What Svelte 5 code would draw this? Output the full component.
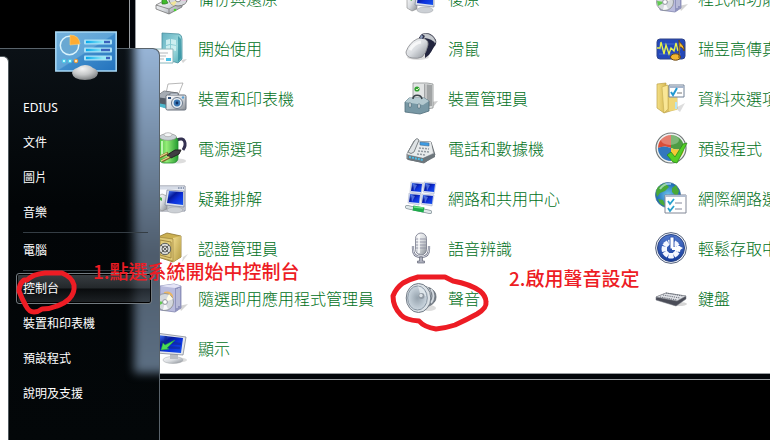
<script>
  const columns = [
    [
      ['backup', '備份與還原'],
      ['start', '開始使用'],
      ['printer', '裝置和印表機'],
      ['power', '電源選項'],
      ['trouble', '疑難排解'],
      ['safe', '認證管理員'],
      ['box', '隨選即用應用程式管理員'],
      ['display', '顯示']
    ],
    [
      ['recovery', '復原'],
      ['mouse', '滑鼠'],
      ['device', '裝置管理員'],
      ['phone', '電話和數據機'],
      ['network', '網路和共用中心'],
      ['mic', '語音辨識'],
      ['speaker', '聲音']
    ],
    [
      ['box', '程式和功能'],
      ['audio', '瑞昱高傳真音效管理員'],
      ['folder', '資料夾選項'],
      ['defaults', '預設程式'],
      ['internet', '網際網路選項'],
      ['ease', '輕鬆存取中心'],
      ['keyboard', '鍵盤']
    ]
  ];
  const groups = [
    ['EDIUS', '文件', '圖片', '音樂'],
    ['電腦'],
    ['控制台', '裝置和印表機', '預設程式', '說明及支援']
  ];
  const segments = [0, 45, 90, 135, 180, 225, 270, 315];
</script>

{#snippet icon(name)}
  <svg class="icon" viewBox="0 0 32 32" aria-hidden="true">
    {#if name === 'backup'}
      <path d="M1 23 14 16l13 4v5L14 32 1 27z" fill="url(#metal)" stroke="#666" stroke-width=".7" />
      <path d="m1 23 13 4 13-7M14 27v5" fill="none" stroke="#777" stroke-width=".8" />
      <ellipse cx="23" cy="18" rx="9" ry="6" fill="#d5d8dc" stroke="#777" />
      <path d="m23 18 7-3 1 4z" fill="#e9b7da" /><path d="m23 18-8 3 4 3z" fill="#f0e59a" />
      <ellipse cx="23" cy="18" rx="2.5" ry="1.8" fill="#fff" stroke="#888" />
      <path d="M7 22V16h3l3 5-3 1z" fill="#3fbb2b" stroke="#287c20" stroke-width=".7" />
      <circle cx="20" cy="28" r="1.3" fill="#46d52c" />
    {:else if name === 'start'}
      <path d="M26 28 32 27l-4 4z" fill="#bbb" opacity=".6" />
      <path d="M7 1 24 2q3 1 3 5v20l-4 4L7 26z" fill="url(#teal)" stroke="#478e9d" stroke-width=".8" />
      <path d="m23 4 3 3v19l-3 4z" fill="#2d8b9c" opacity=".7" />
      <path d="m11 8 4-1v5l-4 1zm5-1 5 1v5l-5-1zm-5 7 4-1v5l-4-1zm5-1 5 1v5l-5-1z" fill="#d7f3f5" opacity=".85" />
      <path d="M1 17h17v14H1z" fill="#fdfdfd" stroke="#8bb6bb" />
      <path d="M4 21h9M4 24h7M4 27h5" stroke="#b2b7bb" stroke-width="1" /><path d="M11 26h5v3h-5z" fill="#4dc2e8" />
    {:else if name === 'printer'}
      <path d="m13 2 15-1-6 15H10z" fill="#fff" stroke="#999" stroke-width=".7" />
      <path d="m1 15 8-6 14 2v14l-9 2L1 22z" fill="#555d67" stroke="#333" stroke-width=".6" />
      <path d="m1 15 8-6 12 2-6 6z" fill="#a6acb3" /><path d="m2 21 11 2v4L2 24z" fill="#4db6cb" />
      <rect x="11" y="13" width="20" height="15" rx="1.5" fill="url(#metal)" stroke="#68717c" />
      <path d="M15 13v-2h8v2" fill="#bcc4cc" stroke="#68717c" stroke-width=".7" />
      <path d="M13 15h3v2h-3z" fill="#32517b" />
      <circle cx="22" cy="21" r="5.5" fill="#e7edf3" stroke="#6d7b8c" /><circle cx="22" cy="21" r="3.4" fill="#3977b4" /><circle cx="22" cy="21" r="1.4" fill="#112f61" />
      <circle cx="28" cy="15.5" r="1.2" fill="#59a0d3" />
    {:else if name === 'power'}
      <ellipse cx="23" cy="29" rx="8" ry="2.5" fill="#bbb" opacity=".5" />
      <path d="M22 8c8-4 10 4 6 10" fill="none" stroke="#343151" stroke-width="3" />
      <rect x="4" y="4" width="19" height="27" rx="5" fill="url(#green)" stroke="#238a30" stroke-width=".8" />
      <ellipse cx="13" cy="5" rx="8.5" ry="3.3" fill="#cbd2d7" stroke="#888" stroke-width=".6" /><ellipse cx="13" cy="2.7" rx="4" ry="2" fill="#f4f6f7" stroke="#999" stroke-width=".6" />
      <path d="M7 9v16" stroke="#d5ffc8" stroke-width="2" opacity=".8" />
      <path d="m12 23 8-5 6 0-2 4-8 4z" fill="#403d43" stroke="#222" />
      <path d="m5 25 8-4m-6 8 8-4" stroke="#7b632a" stroke-width="2.6" /><path d="m4 25 8-4m-6 8 8-4" stroke="#ead58d" stroke-width="1.3" />
    {:else if name === 'trouble' || name === 'recovery'}
      {#if name === 'trouble'}<path d="M1 4h29v25H1z" fill="#fbfcff" stroke="#858b9b" /><path d="M1.5 4.5h28v3h-28z" fill="#d5dbe6" /><path d="M23 6h1.5m1 0H27m1 0h1" stroke="#526487" /><path d="M2 23h27v5H2z" fill="#aeb4bd" opacity=".75" />{/if}
      <path d="m2 15 5-3 5 2v13l-5 2-5-3z" fill="url(#metal)" stroke="#888" stroke-width=".6" />
      <path d="m5 15 2 1v3l-2-1z" fill="#4cad4d" />
      <path d="m12 8 17 1v16l-19-2z" fill="#dae0ed" stroke="#6f7890" stroke-width=".6" /><path d="m14 9 14 1v13l-16-2z" fill="url(#screen)" />
      <ellipse cx="20" cy="28" rx="8" ry="3" fill="#ccd0d5" stroke="#9a9ea5" stroke-width=".5" />
    {:else if name === 'safe'}
      <path d="m28 25 5-3-6 8z" fill="#aaa" opacity=".45" />
      <path d="m3 5 9-4 14 3v21l-8 5-15-5z" fill="#cbb052" stroke="#8d742c" stroke-width=".8" />
      <path d="m18 6 8-2v21l-8 5z" fill="url(#gold)" /><path d="m3 5 15 2v22L3 25z" fill="#e0cb7a" stroke="#947b38" stroke-width=".6" />
      <path d="m5 8 11 2v16L5 23z" fill="none" stroke="#a38a40" />
      <circle cx="10" cy="17" r="5.7" fill="#dadcda" stroke="#5f625e" /><circle cx="10" cy="17" r="3" fill="none" stroke="#62635f" /><path d="m6 13 8 8m0-8-8 8" stroke="#686966" />
    {:else if name === 'box'}
      <path d="m24 24 9-2-7 7z" fill="#aaa" opacity=".5" />
      <path d="m5 4 14-2 7 2v22l-6 4-15-2z" fill="#b9bbdd" stroke="#8387b0" stroke-width=".8" /><path d="m20 6 6-2v22l-6 4z" fill="#8f93bd" />
      <path d="m5 4 14-2 7 2-6 2z" fill="#e5e5f7" /><path d="M22 7v19m2-20v18" stroke="#dee0f1" />
      <path d="M9 10q7-2 9 4v10h-6z" fill="#ecb661" /><path d="M11 14h6v9h-5z" fill="#70bd81" />
      <circle cx="10" cy="20" r="8.5" fill="#d5d9dd" stroke="#858a91" stroke-width=".8" />
      <path d="m10 20 4-8 4 5z" fill="#fffbe5" /><path d="m10 20-8-1 1 5z" fill="#60ca50" /><path d="m10 20-2 8 5-1z" fill="#f7f8fa" />
      <circle cx="10" cy="20" r="2.4" fill="#fff" stroke="#9296a0" />
    {:else if name === 'display'}
      <ellipse cx="23" cy="28" rx="9" ry="2.5" fill="#aaa" opacity=".4" />
      <ellipse cx="18" cy="28" rx="10" ry="3.5" fill="url(#metal)" stroke="#a1a5a9" stroke-width=".5" /><path d="m15 20 8 1v6h-8z" fill="#b9bdc2" />
      <path d="M1 1 31 5l-3 18L1 21z" fill="#e4e6eb" stroke="#848a96" stroke-width=".8" />
      <path d="m2 3 26 3-2 15-24-2z" fill="url(#screen)" /><path d="m6 10 20 2M7 15l18 1M11 4 9 18" stroke="#10298b" stroke-width="2.5" opacity=".55" />
      <path d="m6 18 2-7 2 2 10-5-8 8 2 1z" fill="#4cda54" stroke="#22a63a" stroke-width=".5" />
    {:else if name === 'mouse'}
      <ellipse cx="13" cy="25" rx="11" ry="3" fill="#aaa" opacity=".4" />
      <path d="M14 6q2-5 8-5 6 1 9 7 1 4-2 7l-5 8-4 3 0-12z" fill="#27283d" />
      <path d="M17 2q7-2 12 4l2 4-6 6-5-9z" fill="#c5c9ce" stroke="#777a83" stroke-width=".5" />
      <path d="M20 6q7 1 10 5l-4 9-5 4z" fill="#22253f" />
      <path d="M1 20Q4 11 12 7q4-2 8 0 4 2 3 6-2 9-6 12-4 2-10 1-6-1-6-6z" fill="url(#metal)" stroke="#85878b" stroke-width=".8" />
      <path d="m14 6 3-4 3 2-2 3z" fill="#30334d" /><path d="m16 3 2 1-1 3-2-1z" fill="#8b9cba" />
      <path d="M5 18q4-7 11-8" fill="none" stroke="#fff" stroke-width="3" opacity=".7" />
    {:else if name === 'device'}
      <path d="m26 20 7-1-5 6z" fill="#aaa" opacity=".6" />
      <path d="M8 1h14l6 1v24l-7 1H8z" fill="#e2e4e4" stroke="#8d9091" stroke-width=".8" /><path d="m19 2 8 1v21l-8 1z" fill="#a1a4a5" /><path d="M21 2v22" stroke="#e6e6e6" />
      <circle cx="12" cy="7" r="2.6" fill="#32a332" /><path d="m11 7 1 1 2-2" fill="none" stroke="#d8f6bf" />
      <path d="m0 20 4-4h15l5 3v10l-9 3-15-2z" fill="#7898a5" stroke="#4f6c7a" stroke-width=".8" /><path d="m0 20 4-4h15l5 3-6 4z" fill="#b3c9d0" /><path d="M8 17c0-5 8-5 9 0" fill="none" stroke="#3b454b" stroke-width="1.6" />
      <path d="M4 21h2v4H4zm9 1h2v4h-2z" fill="#e9eef0" stroke="#425a65" stroke-width=".5" />
    {:else if name === 'phone'}
      <path d="m2 22 7-13 17 1 4 13-11 8-17-4z" fill="#aeb4b8" stroke="#50565a" stroke-width=".8" /><path d="m2 22 7-13 17 1 2 11-10 5z" fill="#e8ebec" />
      <path d="m3 23 15 3 12-5v4l-11 6-16-3z" fill="#6d767c" /><path d="m4 25 14 3" stroke="#4bbde9" stroke-width="2" stroke-dasharray="2 1" />
      <path d="m3 20 7-12q2-3 4 0L9 20q-3 3-6 0z" fill="#dfe3e5" stroke="#666c70" stroke-width=".8" />
      <path d="m15 10 9 1v3l-9-1z" fill="#3b9ce5" stroke="#426c94" stroke-width=".6" /><path d="m14 16 10 1m-11 2 11 1m-12 2 9 1" stroke="#9299a0" stroke-width="1.5" stroke-dasharray="2 1" />
    {:else if name === 'network'}
      {#each [[5, 0], [18, 0], [3, 11], [16, 12]] as p}
        <g transform="translate({p[0]} {p[1]})"><path d="m1 0 12 1-2 11-11-2z" fill="#dce2f5" stroke="#a3abc4" stroke-width=".5" /><path d="m2 1 10 1-1 8-10-1z" fill="url(#screen)" /><path d="m3 2 4 1-3 6z" fill="#7c9eff" opacity=".6" /></g>
      {/each}
      <path d="m2 25 23 5" stroke="#85939a" stroke-width="4" stroke-linecap="round" /><path d="m2 25 23 5" stroke="#dfe8e9" stroke-width="2.5" stroke-linecap="round" /><path d="m8 26 11 2" stroke="#1eac4b" stroke-width="5" /><path d="m9 25 9 1" stroke="#70e084" stroke-width="1.5" />
    {:else if name === 'mic'}
      <path d="M8 14v3q0 8 8 8t8-8v-3" fill="none" stroke="#6b6e80" stroke-width="2.2" /><path d="M8 14v3q0 8 8 8t8-8v-3" fill="none" stroke="#dadde7" />
      <path d="M14.5 25v4h-2v2h7v-2h-2v-4z" fill="#aeb1be" stroke="#666879" stroke-width=".7" />
      <rect x="10.500" y="1" width="11" height="22" rx="5.500" fill="url(#metal)" stroke="#737789" stroke-width=".8" /><path d="M11 7h10M11 10h10M11 13h10M11 16h10" stroke="#8e91a3" stroke-width=".9" /><path d="M14 3v18" stroke="#fff" stroke-width="2" opacity=".75" />
    {:else if name === 'speaker'}
      <ellipse cx="24" cy="26" rx="7" ry="3" fill="#aaa" opacity=".4" />
      <path d="m15 3 10 3q6 3 6 9t-7 9l-9 4z" fill="#7a828c" stroke="#5a626b" stroke-width=".8" /><path d="M22 5q7 9 0 19m4-17q5 7 0 14" fill="none" stroke="#d4dae0" stroke-width="1.8" />
      <ellipse cx="13.500" cy="16" rx="12.300" ry="14.500" fill="#dbe1e6" stroke="#727c87" /><ellipse cx="12.500" cy="16" rx="9.800" ry="12" fill="url(#cone)" stroke="#8895a2" />
      <path d="M13 4q7 2 8 10l-5 1z" fill="#eef3f6" opacity=".7" /><circle cx="16.500" cy="14" r="3" fill="#9099a3" /><circle cx="16" cy="13.500" r="1.700" fill="#dce2e7" />
    {:else if name === 'audio'}
      <rect x="2" y="7" width="28" height="20" rx="3" fill="#2448ba" stroke="#304487" /><path d="M4 12h22M4 17h22M4 22h22" stroke="#587bd7" stroke-width=".7" />
      <path d="M2 16h3l1-6 3 12 2-9 3 9 2-6 3 3 2-8 2 8" fill="none" stroke="#e8f349" stroke-width="1.3" />
      <ellipse cx="20.5" cy="25" rx="5" ry="3.2" fill="#f4b52f" stroke="#6a4715" /><path d="M24 26V8c1 5 6 4 5 11-1-4-4-4-4-4" fill="#f5bd33" stroke="#6a4715" />
    {:else if name === 'folder'}
      <path d="m20 26 10-5-5 9z" fill="#aaa" opacity=".4" /><path d="m10 3 12 4v20l-13 4z" fill="#dfc263" stroke="#b69a43" stroke-width=".6" />
      <path d="m2 2 9-1v28l-2 2-7-5z" fill="url(#folder)" stroke="#bda248" stroke-width=".7" /><path d="m7 5 6-2v24l-4 4z" fill="#f9e695" stroke="#c5ac53" stroke-width=".6" /><path d="M14 12h8v16l-8 1z" fill="#efd778" /><path d="M21 20v7" stroke="#b7e3ee" stroke-width="2" />
      <path d="M14 3h15v12H14z" fill="#fff" stroke="#718196" /><path d="M14 5h15" stroke="#a8b6cb" stroke-width="2" /><path d="m16 10 2 3 4-7" fill="none" stroke="#2399d1" stroke-width="2" /><path d="M22 11h5" stroke="#777" />
    {:else if name === 'defaults'}
      <circle cx="16" cy="16" r="15" fill="#eef1f1" stroke="#727979" stroke-width="1.2" /><path d="M16 3a13 13 0 0 0-13 13q7-3 13 0z" fill="#db4d38" /><path d="M16 3a13 13 0 0 1 13 13q-6 3-13 0z" fill="#4e9c44" /><path d="M3 16a13 13 0 0 0 13 13V16q-7-3-13 0z" fill="#3277bd" /><path d="M16 29a13 13 0 0 0 13-13q-6 3-13 0z" fill="#f4c936" />
      <ellipse cx="15" cy="8" rx="9" ry="5" fill="#fff" opacity=".28" />
      <path d="m12 23 4-3 4 5 8-13 4-1-10 20-4-1z" fill="#53cf25" stroke="#298b19" stroke-width=".8" />
    {:else if name === 'internet'}
      <circle cx="13" cy="13" r="12.5" fill="url(#globe)" stroke="#43729c" stroke-width=".8" /><path d="m3 5 7-4 4 4-4 4-5 2-3 4q-2-6 1-10zm14 1 4-3 3 6-2 6-5-5zM3 17l5 1 3 6q-6 0-8-7z" fill="#49a938" /><path d="M5 7q4-6 11-5" fill="none" stroke="#d2f3ff" stroke-width="2" opacity=".6" />
      <path d="M10 13h21v18H10z" fill="#fff" stroke="#818796" /><path d="M10 14h21" stroke="#b3bed0" stroke-width="2" /><path d="m13 19 2 3 4-5m-6 9 2 3 4-5" fill="none" stroke="#29a0cd" stroke-width="1.8" /><path d="M20 21h7M20 27h7" stroke="#85889b" />
    {:else if name === 'ease'}
      <circle cx="16" cy="16" r="15.4" fill="#eef1f7" stroke="#59657e" /><circle cx="16" cy="16" r="13.5" fill="url(#ease)" stroke="#294587" />
      {#each segments as angle}<path transform="rotate({angle} 16 17)" d="m14 21 4 0 1 5q-3 1-6 0z" fill="#f5f7ff" />{/each}
      <path d="M15 5h4v12h-4z" fill="#fff" stroke="#294eac" stroke-width=".9" /><path d="M17 15h5v-2l6 3-6 4v-2h-5z" fill="#fff" />
    {:else if name === 'keyboard'}
      <ellipse cx="24" cy="22" rx="8" ry="2" fill="#999" opacity=".4" /><path d="m1 15 10-4 20 3v3l-10 7-20-6z" fill="#4b4d58" stroke="#737680" stroke-width=".5" /><path d="m1 15 10-4 20 3-9 5z" fill="#dfe1e6" stroke="#81848c" stroke-width=".6" />
      <path d="m5 15 17 3M8 13l17 3m-14-5 17 3" stroke="#696e78" stroke-width="1" stroke-dasharray="1.2 1" />
    {/if}
  </svg>
{/snippet}

<svg class="defs" aria-hidden="true">
  <defs>
    <linearGradient id="metal" x2="1" y2="1"><stop stop-color="#fff" /><stop offset=".5" stop-color="#d9dce0" /><stop offset="1" stop-color="#858b92" /></linearGradient>
    <linearGradient id="teal" x2="1" y2="1"><stop stop-color="#64b1c2" /><stop offset=".6" stop-color="#9bd8dc" /><stop offset="1" stop-color="#4ba9b4" /></linearGradient>
    <linearGradient id="green"><stop stop-color="#41b83c" /><stop offset=".4" stop-color="#96ed78" /><stop offset="1" stop-color="#249c30" /></linearGradient>
    <linearGradient id="gold" x2="1" y2="1"><stop stop-color="#f1dc8e" /><stop offset="1" stop-color="#b39a42" /></linearGradient>
    <linearGradient id="folder"><stop stop-color="#f4df85" /><stop offset="1" stop-color="#d7b952" /></linearGradient>
    <linearGradient id="screen" x2="1" y2="1"><stop stop-color="#4b83ff" /><stop offset=".35" stop-color="#061a9c" /><stop offset=".6" stop-color="#0c30dc" /><stop offset="1" stop-color="#1755ed" /></linearGradient>
    <radialGradient id="cone"><stop stop-color="#95a2ad" /><stop offset="1" stop-color="#cbd6df" /></radialGradient>
    <radialGradient id="globe"><stop stop-color="#6fc6ee" /><stop offset="1" stop-color="#1765b2" /></radialGradient>
    <linearGradient id="ease" x2="0" y2="1"><stop stop-color="#5279cd" /><stop offset="1" stop-color="#153b9b" /></linearGradient>
    <linearGradient id="panel" x2="1" y2="1"><stop stop-color="#75b2dc" /><stop offset=".5" stop-color="#5fa4d7" /><stop offset=".52" stop-color="#3f8ccb" /><stop offset="1" stop-color="#2372bd" /></linearGradient>
    <linearGradient id="bar"><stop stop-color="#00a7ec" /><stop offset=".7" stop-color="#92e9f7" /></linearGradient>
    <radialGradient id="base" cx=".4" cy=".25" r=".8"><stop stop-color="#f5f5f5" /><stop offset=".5" stop-color="#c6c8c9" /><stop offset="1" stop-color="#76797b" /></radialGradient>
  </defs>
</svg>

<div class="desktop">
  <main class="window">
    <div class="sheet">
      {#each columns as column}
        <ul>
          {#each column as [name, label]}
            <li><a href="#item">{@render icon(name)}<span>{label}</span></a></li>
          {/each}
        </ul>
      {/each}
    </div>
  </main>

  <aside class="menu">
    <div class="glow"></div>
    <div class="programs"></div>
    <nav>
      {#each groups as group}
        <ul>
          {#each group as label}
            <li><a href="#menu" class:selected={label === '控制台'}>{label}</a></li>
          {/each}
        </ul>
      {/each}
    </nav>
  </aside>

  <svg class="badge" viewBox="0 0 62 50" aria-hidden="true">
    <rect x=".8" y="1" width="60.4" height="39" fill="url(#panel)" stroke="#a9d9f5" stroke-width="1.5" />
    <circle cx="14.500" cy="14.500" r="9.200" fill="#69a8d2" stroke="#d9f3fc" stroke-width="1.500" />
    <path d="M15 14V4q9 0 10 9z" fill="#ffac32" stroke="#ffd074" stroke-width=".6" />
    {#each [11, 19, 27] as y, i}
      <rect x="29" y={y - 2.5} width="28" height="5" rx="1" fill="#a9e0f6" /><rect x="31" y={y - 1.2} width="24" height="2.4" fill="url(#bar)" /><rect x={[49, 46, 51][i]} y={y - 1.2} width={[6, 9, 4][i]} height="2.4" fill="#3b63bd" />
    {/each}
    <circle cx="9" cy="30" r="1.800" fill="#bdfaff" stroke="#42c9e8" /><circle cx="15" cy="30" r="1.800" fill="#bdfaff" stroke="#42c9e8" /><circle cx="21" cy="30" r="1.800" fill="#ffe4b5" stroke="#f29a30" />
    <path d="M17 42q1-4 5-5 4-3 8-3 5 0 8 3 4 1 5 5-1 7-13 7T17 42z" fill="url(#base)" />
  </svg>

  <svg class="marks" viewBox="0 0 500 340" aria-hidden="true">
    <path d="M27 280q6-6 18-7h17q10 4 12 12 1 8-5 14-5 5-12 7-7 3-15 3-4 3-8 3-5 0-8-6-4-7-7-15 0-7 5-11z" />
    <path d="M418 277h27l8 4q17 3 27 10 6 5 6 11 1 6-9 12-11 6-22 11-9 3-19 4-12-2-17-8-14-1-18-6-8-8-8-19 3-8 10-13 7-4 15-6z" />
  </svg>
  <p class="note first">1.點選系統開始中控制台</p>
  <p class="note second">2.啟用聲音設定</p>
</div>

<style>
  :global(body) {
    background: #000;
  }
  .desktop {
    position: relative;
    height: 100vh;
    overflow: hidden;
    background: #000;
    font-family: "Noto Sans CJK TC", "Noto Sans", sans-serif;
  }
  ul {
    list-style: none;
    margin: 0;
    padding: 0;
  }
  a {
    color: inherit;
    text-decoration: none;
  }
  .defs {
    position: absolute;
    width: 0;
    height: 0;
  }
  .window {
    position: absolute;
    top: -34px;
    left: 129px;
    right: -20px;
    padding: 5px;
    border: 1px solid #9a9ea2;
    background: #02050a;
  }
  .sheet {
    display: flex;
    padding-left: 19px;
    border: 1px solid #9a9ea2;
    background: #fff;
  }
  .sheet ul {
    flex: none;
    width: 250px;
  }
  .sheet a {
    display: flex;
    align-items: center;
    gap: 11px;
    height: 50px;
    color: #00701a;
    font-size: 16px;
    font-weight: 300;
    line-height: 24px;
    white-space: nowrap;
  }
  .icon {
    flex: none;
    width: 32px;
    height: 32px;
    overflow: visible;
  }
  .menu {
    position: absolute;
    top: 48px;
    bottom: -2px;
    left: 0;
    box-sizing: border-box;
    width: 160px;
    overflow: hidden;
    border: 1px solid #59636b;
    border-left: 0;
    border-radius: 0 7px 0 0;
    background: linear-gradient(#0b1116, #020507 40%, #030709);
  }
  .glow {
    position: absolute;
    top: -12px;
    left: 134px;
    width: 50px;
    height: 336px;
    background: linear-gradient(#9bb9dc, #7187a0 35%, #4d5b6b 65%, #5c6f83);
    filter: blur(5px);
  }
  .programs {
    position: absolute;
    top: 7px;
    bottom: -4px;
    left: -10px;
    width: 18px;
    border: 1px solid #50595e;
    border-left: 0;
    border-radius: 0 6px 0 0;
    background: #fff;
  }
  nav {
    position: relative;
    padding: 41px 7px 0 16px;
    color: #fff;
    font-family: "Noto Sans", "Noto Sans CJK TC", sans-serif;
    font-size: 12px;
  }
  nav ul + ul::before {
    content: "";
    display: block;
    height: 2px;
    margin: 0 4px 0 7px;
    border-bottom: 1px solid #343d44;
  }
  nav li {
    padding: 2px 0;
  }
  nav a {
    display: block;
    padding: 0 6px;
    border: 1px solid transparent;
    border-radius: 3px;
    line-height: 29px;
  }
  nav a.selected {
    border-color: #737b81;
    background: linear-gradient(#545b60aa, #33383caa 49%, #0c0e10aa 51%, #2b3034aa);
    box-shadow: inset 0 0 0 1px #000;
  }
  .badge {
    position: absolute;
    top: 31px;
    left: 55px;
    width: 62px;
    height: 50px;
  }
  .marks {
    position: absolute;
    top: 0;
    left: 0;
    width: 500px;
    height: 340px;
    fill: none;
    stroke: #ed1c24;
    stroke-width: 5;
    stroke-linecap: round;
    stroke-linejoin: round;
    pointer-events: none;
  }
  .note {
    position: absolute;
    margin: 0;
    color: #ed1c24;
    font-size: 19px;
    font-weight: 500;
    line-height: 28px;
    white-space: nowrap;
  }
  .first {
    top: 257px;
    left: 93px;
  }
  .second {
    top: 264px;
    left: 509px;
  }
</style>
